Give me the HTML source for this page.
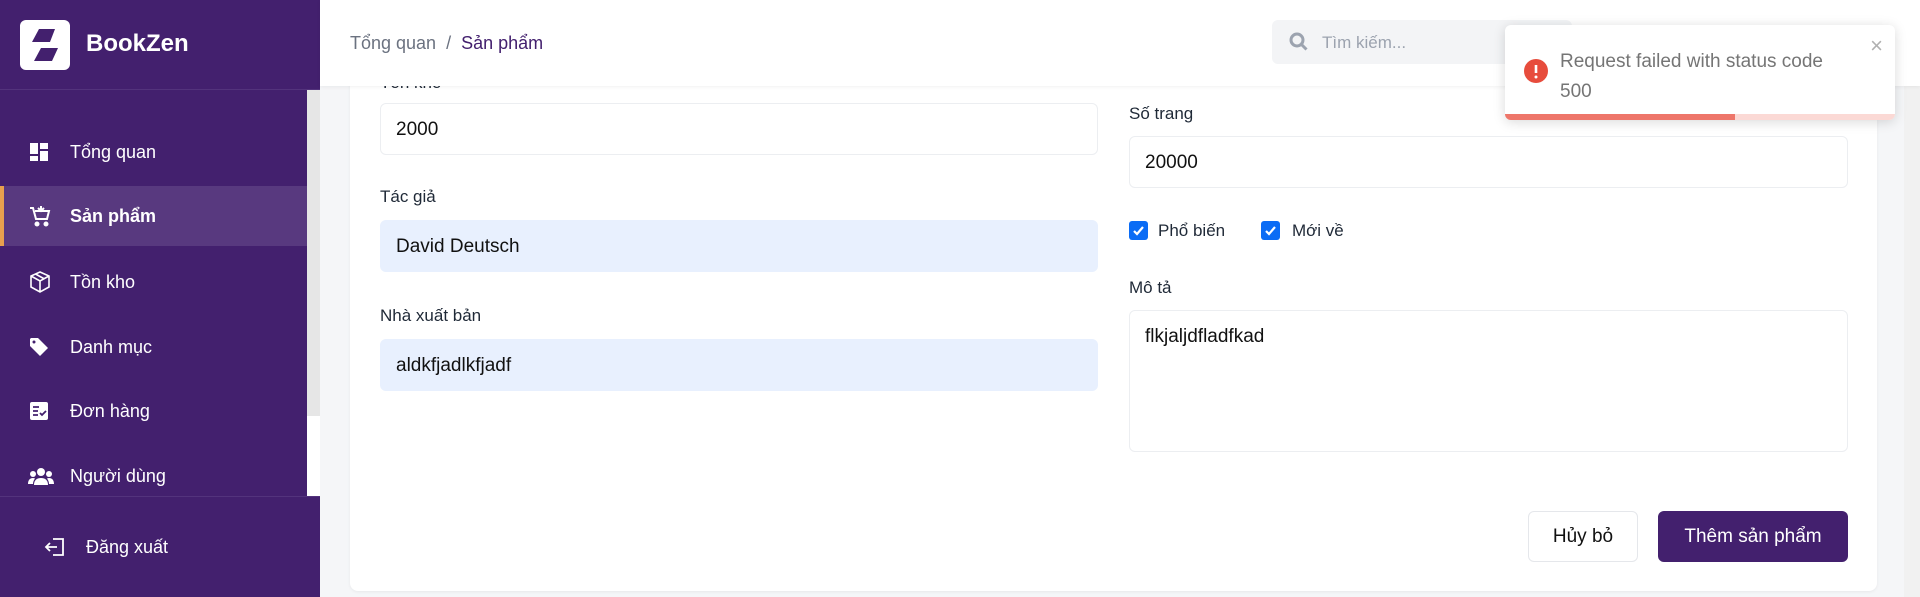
<!DOCTYPE html>
<html><head><meta charset="utf-8"><style>
*{box-sizing:border-box;margin:0;padding:0}
body{width:1920px;height:597px;overflow:hidden;background:#f5f6f8;font-family:"Liberation Sans",sans-serif;position:relative;color:#1f2937}
.sb{position:absolute;left:0;top:0;width:320px;height:597px;background:#43206e;color:#fff}
.logo{position:absolute;left:20px;top:20px;width:50px;height:50px;background:#fff;border-radius:6px}
.brand{position:absolute;left:86px;top:30px;font-size:24px;font-weight:bold}
.div1{position:absolute;left:0;top:89px;width:320px;height:1px;background:#53337c}
.track{position:absolute;left:307px;top:90px;width:13px;height:326px;background:#e6e6e6}
.track2{position:absolute;left:307px;top:416px;width:13px;height:80px;background:#fff}
.nav{position:absolute;left:0;width:307px;height:60px;display:flex;align-items:center;font-size:18px}
.nav svg{position:absolute;left:28px}
.nav span{position:absolute;left:70px}
.act{background:#58397f;border-left:4px solid #e8a04e}
.div2{position:absolute;left:0;top:496px;width:320px;height:1px;background:#53337c}
.hdr{position:absolute;left:320px;top:0;width:1600px;height:86px;background:#fff;box-shadow:0 1px 4px rgba(0,0,0,.06);z-index:2}
.bc{position:absolute;left:30px;top:33px;font-size:18px;color:#6b7280}
.bc b{font-weight:normal;color:#43206e}
.search{position:absolute;left:952px;top:20px;width:300px;height:44px;background:#f3f4f6;border-radius:6px}
.search span{position:absolute;left:50px;top:13px;font-size:17px;color:#9ca3af}
.card{position:absolute;left:350px;top:60px;width:1527px;height:531px;background:#fff;border-radius:8px;box-shadow:0 1px 3px rgba(0,0,0,.06)}
.lbl{position:absolute;font-size:17px;color:#1f2937}
.inp{position:absolute;height:52px;border:1px solid #eceef1;border-radius:6px;font-size:19px;padding:15px 15px;color:#111}
.af{background:#e8f0fe;border-color:#e8f0fe}
.cb{position:absolute;top:161px;width:19px;height:19px;background:#0b6cf5;border-radius:3px}
.btn{position:absolute;height:51px;border-radius:6px;font-size:19px;display:flex;align-items:center;justify-content:center}
.toast{position:absolute;left:1505px;top:25px;width:390px;height:95px;background:#fff;border-radius:6px;box-shadow:0 2px 12px rgba(0,0,0,.15);z-index:5;overflow:hidden}
.rs{position:absolute;left:1904px;top:86px;width:16px;height:511px;background:#f1f1f1}
</style></head><body>
<div class="sb">
 <div class="logo"><svg width="50" height="50" viewBox="0 0 50 50"><path d="M19 9h16l-5 13H12z" fill="#43206e"/><path d="M21 28h17l-6 13H14z" fill="#43206e"/></svg></div>
 <div class="brand">BookZen</div>
 <div class="div1"></div>
 <div class="track"></div><div class="track2"></div>
 <div class="nav" style="top:122px"><svg width="22" height="22" viewBox="0 0 22 22" fill="#fff"><rect x="2" y="2" width="8" height="11"/><rect x="12" y="2" width="8" height="6"/><rect x="12" y="10" width="8" height="10"/><rect x="2" y="15" width="8" height="5"/></svg><span>Tổng quan</span></div>
 <div class="nav act" style="top:186px"><svg width="24" height="24" viewBox="0 0 24 24" fill="none" stroke="#fff" stroke-width="2" style="left:24px"><path d="M2 4h3l3 11h11l2-8H7"/><circle cx="9" cy="20" r="1.5" fill="#fff"/><circle cx="18" cy="20" r="1.5" fill="#fff"/><path d="M13 2v5M10 4l3 3 3-3"/></svg><span style="left:66px;font-weight:bold">Sản phẩm</span></div>
 <div class="nav" style="top:252px"><svg width="24" height="24" viewBox="0 0 24 24" fill="none" stroke="#fff" stroke-width="1.6"><path d="M12 2l9 4v11l-9 5-9-5V6z M3 6l9 5 9-5 M12 11v11 M7.5 4l9 5"/></svg><span>Tồn kho</span></div>
 <div class="nav" style="top:317px"><svg width="24" height="24" viewBox="0 0 24 24" fill="#fff"><path d="M2 4v7l10 10 8-8L10 3H3z"/><circle cx="6" cy="7" r="1.5" fill="#43206e"/></svg><span>Danh mục</span></div>
 <div class="nav" style="top:381px"><svg width="22" height="22" viewBox="0 0 22 22"><rect x="2" y="2" width="18" height="18" rx="2" fill="#fff"/><path d="M5 7h6M5 11h5M5 15h5M12 13l2 2 4-4" stroke="#43206e" stroke-width="1.8" fill="none"/></svg><span>Đơn hàng</span></div>
 <div class="nav" style="top:446px"><svg width="26" height="22" viewBox="0 0 26 22" fill="#fff"><circle cx="13" cy="7" r="4"/><circle cx="5" cy="9" r="3"/><circle cx="21" cy="9" r="3"/><path d="M6 20c0-5 3-7 7-7s7 2 7 7z"/><path d="M0 19c0-4 2-6 5-6 1 0 2 .5 2 .5-1 1.5-2 3-2 5.5zM26 19c0-4-2-6-5-6-1 0-2 .5-2 .5 1 1.5 2 3 2 5.5z"/></svg><span>Người dùng</span></div>
 <div class="div2"></div>
 <div class="nav" style="top:517px"><svg width="22" height="22" viewBox="0 0 22 22" fill="none" stroke="#fff" stroke-width="1.8" style="left:44px"><path d="M9 3h10v16H9M13 11H2M6 7l-4 4 4 4"/></svg><span style="left:86px">Đăng xuất</span></div>
</div>
<div class="hdr">
 <div class="bc">Tổng quan &nbsp;/&nbsp; <b>Sản phẩm</b></div>
 <div class="search"><svg width="22" height="22" viewBox="0 0 22 22" style="position:absolute;left:16px;top:11px" fill="none" stroke="#9ca3af" stroke-width="3"><circle cx="9" cy="9" r="6"/><path d="M13.5 13.5l5 5"/></svg><span>Tìm kiếm...</span></div>
</div>
<div class="rs"></div>
<div class="card">
 <div class="lbl" style="left:30px;top:13px">Tồn kho</div>
 <div class="inp" style="left:30px;top:43px;width:718px">2000</div>
 <div class="lbl" style="left:30px;top:127px">Tác giả</div>
 <div class="inp af" style="left:30px;top:160px;width:718px">David Deutsch</div>
 <div class="lbl" style="left:30px;top:246px">Nhà xuất bản</div>
 <div class="inp af" style="left:30px;top:279px;width:718px">aldkfjadlkfjadf</div>
 <div class="lbl" style="left:779px;top:44px">Số trang</div>
 <div class="inp" style="left:779px;top:76px;width:719px">20000</div>
 <div class="cb" style="left:779px"><svg width="19" height="19" viewBox="0 0 19 19"><path d="M5 10l3 3 6-7" stroke="#fff" stroke-width="2.2" fill="none"/></svg></div>
 <div class="lbl" style="left:808px;top:161px">Phổ biến</div>
 <div class="cb" style="left:911px"><svg width="19" height="19" viewBox="0 0 19 19"><path d="M5 10l3 3 6-7" stroke="#fff" stroke-width="2.2" fill="none"/></svg></div>
 <div class="lbl" style="left:942px;top:161px">Mới về</div>
 <div class="lbl" style="left:779px;top:218px">Mô tả</div>
 <div class="inp" style="left:779px;top:250px;width:719px;height:142px">flkjaljdfladfkad</div>
 <div class="btn" style="left:1178px;width:110px;border:1px solid #e5e7eb;color:#111;top:451px">Hủy bỏ</div>
 <div class="btn" style="left:1308px;width:190px;background:#43206e;color:#fff;top:451px">Thêm sản phẩm</div>
</div>
<div class="toast">
 <svg width="24" height="24" viewBox="0 0 24 24" style="position:absolute;left:19px;top:34px"><circle cx="12" cy="12" r="12" fill="#e74c3c"/><path d="M12 6v8" stroke="#fff" stroke-width="2.6"/><circle cx="12" cy="18" r="1.5" fill="#fff"/></svg>
 <div style="position:absolute;left:55px;top:22px;font-size:19px;color:#757575;line-height:30px">Request failed with status code<br>500</div>
 <div style="position:absolute;right:12px;top:8px;font-size:22px;color:#b0b0b0">×</div>
 <div style="position:absolute;left:0;bottom:0;width:100%;height:6px;background:#fbd9d5"></div>
 <div style="position:absolute;left:0;bottom:0;width:230px;height:6px;background:#ee766a"></div>
</div>
</body></html>
